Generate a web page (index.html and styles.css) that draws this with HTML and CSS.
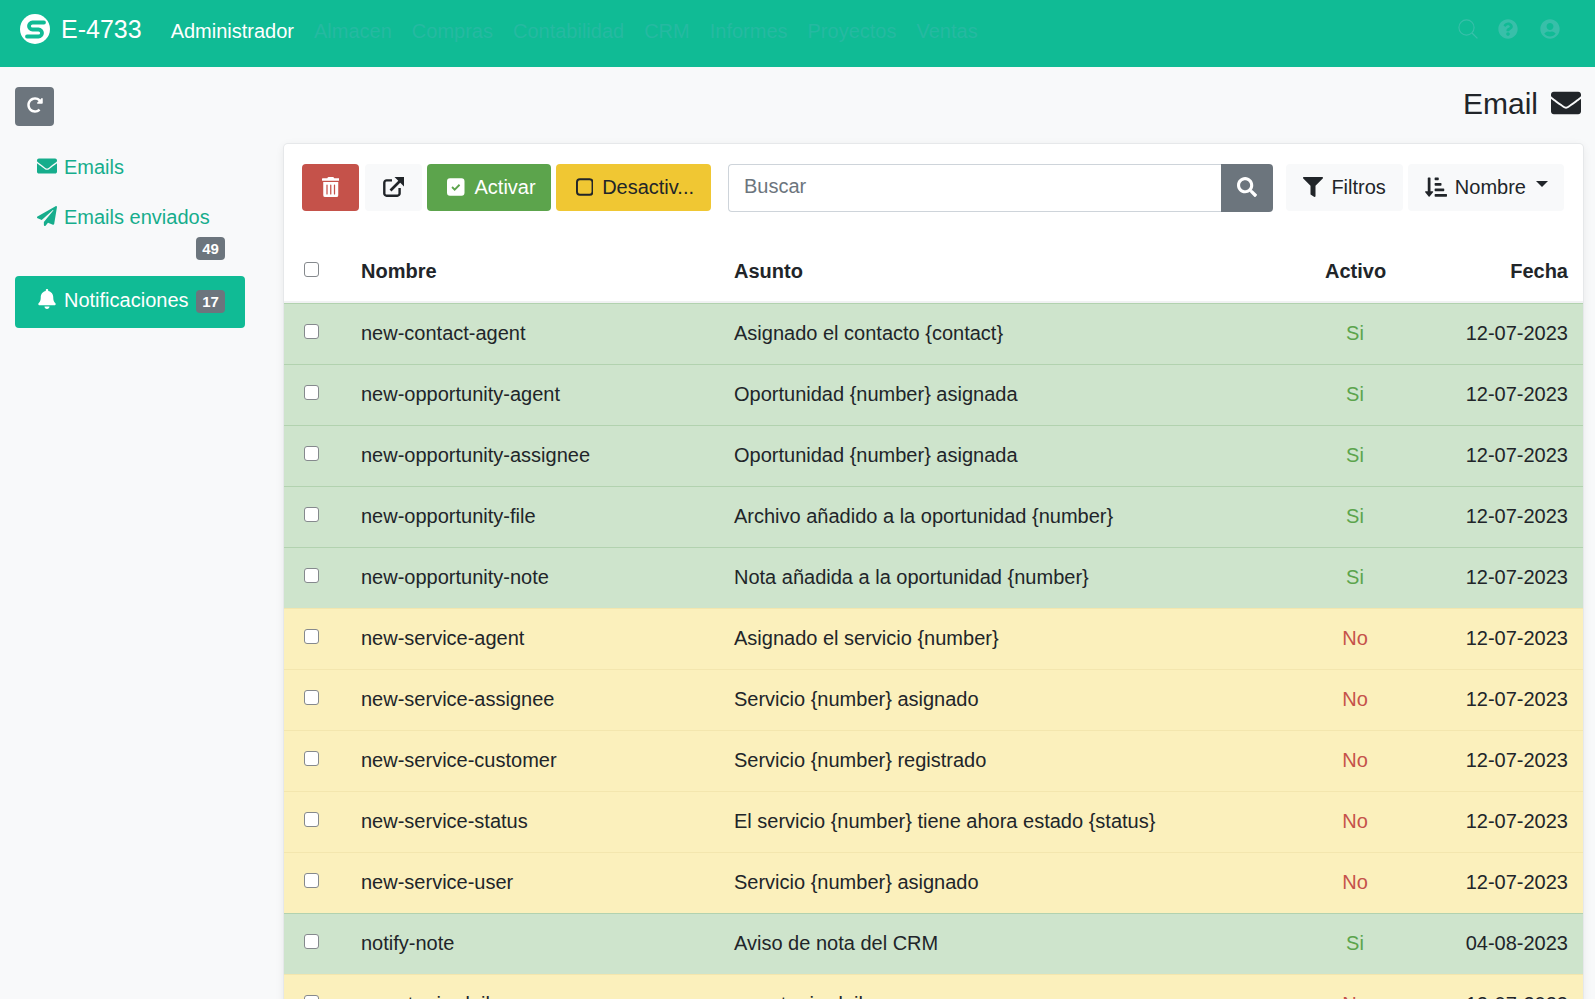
FILE: index.html
```html
<!DOCTYPE html>
<html lang="es">
<head>
    <meta charset="UTF-8">
    <meta name="viewport" content="width=device-width, initial-scale=1.0">
    <title>Email</title>
    <link rel="stylesheet" href="styles.css">
</head>
<body>
    <nav class="topbar">
        <a class="brand" href="#">
            <svg class="brand-logo" viewBox="0 0 30 30"><circle cx="15" cy="15" r="15" fill="#fff"/><path d="M24 8.5H12.5a3.5 3.5 0 0 0 0 7h6a3.5 3.5 0 0 1 0 7H7" fill="none" stroke="#10bb95" stroke-width="3.8" stroke-linecap="round"/></svg>
            <span>E-4733</span>
        </a>
        <div class="menu">
            <a class="menu-item active" href="#">Administrador</a>
            <a class="menu-item" href="#">Almacen</a>
            <a class="menu-item" href="#">Compras</a>
            <a class="menu-item" href="#">Contabilidad</a>
            <a class="menu-item" href="#">CRM</a>
            <a class="menu-item" href="#">Informes</a>
            <a class="menu-item" href="#">Proyectos</a>
            <a class="menu-item" href="#">Ventas</a>
        </div>
        <div class="top-icons">
            <svg class="top-icon top-search" viewBox="0 0 20 20"><circle cx="8.5" cy="8.5" r="7.6" fill="none" stroke="currentColor" stroke-width="1.1"/><path d="M14 14l5.4 5.4" stroke="currentColor" stroke-width="1.3" fill="none"/></svg>
            <svg class="top-icon" viewBox="0 0 512 512"><path fill="currentColor" d="M504 256c0 136.997-111.043 248-248 248S8 392.997 8 256C8 119.083 119.043 8 256 8s248 111.083 248 248zM262.655 90c-54.497 0-89.255 22.957-116.549 63.758-3.536 5.286-2.353 12.415 2.715 16.258l34.699 26.31c5.205 3.947 12.621 3.008 16.665-2.122 17.864-22.658 30.113-35.797 57.303-35.797 20.429 0 45.698 13.148 45.698 32.958 0 14.976-12.363 22.667-32.534 33.976C247.128 238.528 216 254.941 216 296v4c0 6.627 5.373 12 12 12h56c6.627 0 12-5.373 12-12v-1.333c0-28.462 83.186-29.647 83.186-106.667 0-58.002-60.165-102-116.531-102zM256 338c-25.365 0-46 20.635-46 46 0 25.364 20.635 46 46 46s46-20.636 46-46c0-25.365-20.635-46-46-46z"/></svg>
            <svg class="top-icon" viewBox="0 0 496 512"><path fill="currentColor" d="M248 8C111 8 0 119 0 256s111 248 248 248 248-111 248-248S385 8 248 8zm0 96c48.6 0 88 39.4 88 88s-39.4 88-88 88-88-39.4-88-88 39.4-88 88-88zm0 344c-58.7 0-111.3-26.6-146.5-68.2 18.8-35.4 55.6-59.8 98.5-59.8 2.4 0 4.8.4 7.1 1.1 13 4.2 26.6 6.9 40.9 6.9 14.3 0 28-2.7 40.9-6.9 2.3-.7 4.7-1.1 7.1-1.1 42.9 0 79.7 24.4 98.5 59.8C359.3 421.4 306.7 448 248 448z"/></svg>
        </div>
    </nav>

    <div class="page-head">
        <button class="btn-refresh" type="button">
            <svg viewBox="0 0 512 512"><path fill="currentColor" d="M256.455 8c66.269.119 126.437 26.233 170.859 68.685l35.715-35.715C478.149 25.851 504 36.559 504 57.941V192c0 13.255-10.745 24-24 24H345.941c-21.382 0-32.09-25.851-16.971-40.971l41.75-41.75c-30.864-28.899-70.801-44.907-113.23-45.273-92.398-.798-170.283 73.977-169.484 169.442C88.764 348.009 162.184 424 256 424c41.127 0 79.997-14.678 110.629-41.556 4.743-4.161 11.906-3.908 16.368.553l39.662 39.662c4.872 4.872 4.631 12.815-.482 17.433C378.202 479.813 319.926 504 256 504 119.034 504 8.001 392.967 8 256.002 7.999 119.193 119.646 7.755 256.455 8z"/></svg>
        </button>
        <h1 class="page-title">
            Email
            <svg viewBox="0 0 512 512"><path fill="currentColor" d="M502.3 190.8c3.9-3.1 9.7-.2 9.7 4.7V400c0 26.5-21.5 48-48 48H48c-26.5 0-48-21.5-48-48V195.6c0-5 5.7-7.8 9.7-4.7 22.4 17.4 52.1 39.5 154.1 113.6 21.1 15.4 56.7 47.8 92.2 47.6 35.7.3 72-32.8 92.3-47.6 102-74.1 131.6-96.3 154-113.7zM256 320c23.2.4 56.6-29.2 73.4-41.4 132.7-96.3 142.8-104.7 173.4-128.7 5.8-4.5 9.2-11.5 9.2-18.9v-19c0-26.5-21.5-48-48-48H48C21.5 64 0 85.5 0 112v19c0 7.4 3.4 14.3 9.2 18.9 30.6 23.9 40.7 32.4 173.4 128.7 16.8 12.2 50.2 41.8 73.4 41.4z"/></svg>
        </h1>
    </div>

    <div class="content">
        <aside class="sidebar">
            <a class="side-link" href="#">
                <svg class="side-icon" viewBox="0 0 512 512"><path fill="currentColor" d="M502.3 190.8c3.9-3.1 9.7-.2 9.7 4.7V400c0 26.5-21.5 48-48 48H48c-26.5 0-48-21.5-48-48V195.6c0-5 5.7-7.8 9.7-4.7 22.4 17.4 52.1 39.5 154.1 113.6 21.1 15.4 56.7 47.8 92.2 47.6 35.7.3 72-32.8 92.3-47.6 102-74.1 131.6-96.3 154-113.7zM256 320c23.2.4 56.6-29.2 73.4-41.4 132.7-96.3 142.8-104.7 173.4-128.7 5.8-4.5 9.2-11.5 9.2-18.9v-19c0-26.5-21.5-48-48-48H48C21.5 64 0 85.5 0 112v19c0 7.4 3.4 14.3 9.2 18.9 30.6 23.9 40.7 32.4 173.4 128.7 16.8 12.2 50.2 41.8 73.4 41.4z"/></svg>
                <span>Emails</span>
            </a>
            <a class="side-link" href="#">
                <svg class="side-icon" viewBox="0 0 512 512"><path fill="currentColor" d="M476 3.2L12.5 270.6c-18.1 10.4-15.8 35.6 2.2 43.2L121 358.4l287.3-253.2c5.5-4.9 13.3 2.6 8.6 8.3L176 407v80.5c0 23.6 28.5 32.9 42.5 15.8L282 426l124.6 52.2c14.2 6 30.4-2.9 33-18.2l72-432C515 7.8 493.3-6.8 476 3.2z"/></svg>
                <span>Emails enviados</span>
                <span class="badge badge-wrapped">49</span>
            </a>
            <a class="side-link active" href="#">
                <svg class="side-icon" viewBox="0 0 448 512"><path fill="currentColor" d="M224 512c35.32 0 63.97-28.65 63.97-64H160.03c0 35.35 28.65 64 63.97 64zm215.39-149.71c-19.32-20.76-55.47-51.99-55.47-154.29 0-77.7-54.48-139.9-127.94-155.16V32c0-17.67-14.32-32-31.98-32s-31.98 14.33-31.98 32v20.84C118.56 68.1 64.08 130.3 64.08 208c0 102.3-36.15 133.53-55.47 154.29-6 6.45-8.66 14.16-8.61 21.71.11 16.4 12.98 32 32.1 32h383.8c19.12 0 32-15.6 32.1-32 .05-7.55-2.61-15.27-8.61-21.71z"/></svg>
                <span>Notificaciones</span>
                <span class="badge">17</span>
            </a>
        </aside>

        <main class="card">
            <div class="toolbar">
                <button class="btn btn-danger btn-icon" type="button">
                    <svg class="icon" viewBox="0 0 448 512"><path fill="currentColor" d="M32 464a48 48 0 0 0 48 48h288a48 48 0 0 0 48-48V128H32zm272-256a16 16 0 0 1 32 0v224a16 16 0 0 1-32 0zm-96 0a16 16 0 0 1 32 0v224a16 16 0 0 1-32 0zm-96 0a16 16 0 0 1 32 0v224a16 16 0 0 1-32 0zM432 32H312l-9.4-18.7A24 24 0 0 0 281.1 0H166.8a23.72 23.72 0 0 0-21.4 13.3L136 32H16A16 16 0 0 0 0 48v32a16 16 0 0 0 16 16h416a16 16 0 0 0 16-16V48a16 16 0 0 0-16-16z"/></svg>
                </button>
                <button class="btn btn-light btn-icon btn-export" type="button">
                    <svg class="icon icon-export" viewBox="0 0 21 20"><path d="M9 3.4H3.6a2.3 2.3 0 0 0-2.3 2.3v10.7a2.3 2.3 0 0 0 2.3 2.3h10.7a2.3 2.3 0 0 0 2.3-2.3V11" fill="none" stroke="currentColor" stroke-width="2.4"/><path d="M7.5 13.5L17 4" fill="none" stroke="currentColor" stroke-width="2.6"/><path d="M11.5 0H21V9.5z" fill="currentColor"/></svg>
                </button>
                <button class="btn btn-success" type="button">
                    <svg class="icon" viewBox="0 0 18 20"><rect y="1" width="18" height="18" rx="3" fill="#fff"/><path d="M5.2 10l2.7 2.7 5-5" fill="none" stroke="#5ca44c" stroke-width="1.9"/></svg>
                    <span>Activar</span>
                </button>
                <button class="btn btn-warning" type="button">
                    <svg class="icon" viewBox="0 0 18 20"><rect x="1" y="2" width="16" height="16" rx="3" fill="none" stroke="currentColor" stroke-width="2"/></svg>
                    <span>Desactiv...</span>
                </button>
                <div class="search">
                    <input class="search-input" type="text" placeholder="Buscar">
                    <button class="search-btn" type="button">
                        <svg class="icon-wide" viewBox="0 0 512 512"><path fill="currentColor" d="M505 442.7L405.3 343c-4.5-4.5-10.6-7-17-7H372c27.6-35.3 44-79.7 44-128C416 93.1 322.9 0 208 0S0 93.1 0 208s93.1 208 208 208c48.3 0 92.7-16.4 128-44v16.3c0 6.4 2.5 12.5 7 17l99.7 99.7c9.4 9.4 24.6 9.4 33.9 0l28.3-28.3c9.4-9.4 9.4-24.6.1-34zM208 336c-70.7 0-128-57.2-128-128 0-70.7 57.2-128 128-128 70.7 0 128 57.2 128 128 0 70.7-57.2 128-128 128z"/></svg>
                    </button>
                </div>
                <button class="btn btn-light btn-filter" type="button">
                    <svg class="icon-wide" viewBox="0 0 512 512"><path fill="currentColor" d="M487.976 0H24.028C2.71 0-8.047 25.866 7.058 40.971L192 225.941V432c0 7.831 3.821 15.17 10.237 19.662l80 55.98C298.02 518.69 320 507.493 320 487.98V225.941l184.947-184.97C520.021 25.896 509.338 0 487.976 0z"/></svg>
                    <span>Filtros</span>
                </button>
                <button class="btn btn-light btn-sort" type="button">
                    <svg class="icon-sort" viewBox="0 0 512 512"><path fill="currentColor" d="M240 96h64a16 16 0 0 0 16-16V48a16 16 0 0 0-16-16h-64a16 16 0 0 0-16 16v32a16 16 0 0 0 16 16zm0 128h128a16 16 0 0 0 16-16v-32a16 16 0 0 0-16-16H240a16 16 0 0 0-16 16v32a16 16 0 0 0 16 16zm256 192H240a16 16 0 0 0-16 16v32a16 16 0 0 0 16 16h256a16 16 0 0 0 16-16v-32a16 16 0 0 0-16-16zm-256-64h192a16 16 0 0 0 16-16v-32a16 16 0 0 0-16-16H240a16 16 0 0 0-16 16v32a16 16 0 0 0 16 16zm-64 0h-48V48a16 16 0 0 0-16-16H80a16 16 0 0 0-16 16v304H16c-14.19 0-21.37 17.24-11.29 27.31l80 96a16 16 0 0 0 22.62 0l80-96C197.35 369.26 190.22 352 176 352z"/></svg>
                    <span>Nombre</span>
                    <i class="caret"></i>
                </button>
            </div>

            <table class="data-table">
                <colgroup>
                    <col class="col-check">
                    <col class="col-name">
                    <col>
                    <col class="col-state">
                    <col class="col-date">
                </colgroup>
                <thead>
                    <tr>
                        <th class="cell-check"><input class="check" type="checkbox"></th>
                        <th>Nombre</th>
                        <th>Asunto</th>
                        <th class="center">Activo</th>
                        <th class="right">Fecha</th>
                    </tr>
                </thead>
                <tbody>
                    <tr class="row-on"><td class="cell-check"><input class="check" type="checkbox"></td><td>new-contact-agent</td><td>Asignado el contacto {contact}</td><td class="center state">Si</td><td class="right">12-07-2023</td></tr>
                    <tr class="row-on"><td class="cell-check"><input class="check" type="checkbox"></td><td>new-opportunity-agent</td><td>Oportunidad {number} asignada</td><td class="center state">Si</td><td class="right">12-07-2023</td></tr>
                    <tr class="row-on"><td class="cell-check"><input class="check" type="checkbox"></td><td>new-opportunity-assignee</td><td>Oportunidad {number} asignada</td><td class="center state">Si</td><td class="right">12-07-2023</td></tr>
                    <tr class="row-on"><td class="cell-check"><input class="check" type="checkbox"></td><td>new-opportunity-file</td><td>Archivo añadido a la oportunidad {number}</td><td class="center state">Si</td><td class="right">12-07-2023</td></tr>
                    <tr class="row-on"><td class="cell-check"><input class="check" type="checkbox"></td><td>new-opportunity-note</td><td>Nota añadida a la oportunidad {number}</td><td class="center state">Si</td><td class="right">12-07-2023</td></tr>
                    <tr class="row-off"><td class="cell-check"><input class="check" type="checkbox"></td><td>new-service-agent</td><td>Asignado el servicio {number}</td><td class="center state">No</td><td class="right">12-07-2023</td></tr>
                    <tr class="row-off"><td class="cell-check"><input class="check" type="checkbox"></td><td>new-service-assignee</td><td>Servicio {number} asignado</td><td class="center state">No</td><td class="right">12-07-2023</td></tr>
                    <tr class="row-off"><td class="cell-check"><input class="check" type="checkbox"></td><td>new-service-customer</td><td>Servicio {number} registrado</td><td class="center state">No</td><td class="right">12-07-2023</td></tr>
                    <tr class="row-off"><td class="cell-check"><input class="check" type="checkbox"></td><td>new-service-status</td><td>El servicio {number} tiene ahora estado {status}</td><td class="center state">No</td><td class="right">12-07-2023</td></tr>
                    <tr class="row-off"><td class="cell-check"><input class="check" type="checkbox"></td><td>new-service-user</td><td>Servicio {number} asignado</td><td class="center state">No</td><td class="right">12-07-2023</td></tr>
                    <tr class="row-on"><td class="cell-check"><input class="check" type="checkbox"></td><td>notify-note</td><td>Aviso de nota del CRM</td><td class="center state">Si</td><td class="right">04-08-2023</td></tr>
                    <tr class="row-off"><td class="cell-check"><input class="check" type="checkbox"></td><td>report-min-daily</td><td>report-min-daily</td><td class="center state">No</td><td class="right">12-07-2023</td></tr>
                </tbody>
            </table>
        </main>
    </div>
</body>
</html>
```

FILE: styles.css
```css
* {
    box-sizing: border-box;
}

html, body {
    height: 100%;
    overflow: hidden;
}

body {
    margin: 0;
    background-color: #f8f9fa;
    color: #212529;
    font-family: "Liberation Sans", Arial, sans-serif;
    font-size: 20px;
    line-height: 30px;
}

a {
    text-decoration: none;
}

/* top bar */
.topbar {
    display: flex;
    align-items: center;
    height: 67px;
    padding: 0 35px 5px 20px;
    background-color: #10bb95;
}

.brand {
    display: flex;
    align-items: center;
    gap: 11px;
    margin: -4px 19px 0 0;
    color: #fff;
    font-size: 25px;
}

.brand-logo {
    width: 30px;
    height: 30px;
}

.menu {
    display: flex;
}

.menu-item {
    padding: 0 10px;
    color: #25b9a1;
}

.menu-item.active {
    color: #fff;
}

.top-icons {
    display: flex;
    align-items: center;
    gap: 22px;
    margin: -4px 0 0 auto;
    color: #38bfa9;
}

.top-icon {
    width: 20px;
    height: 20px;
}

.top-search {
    margin-right: -2px;
}

/* page head */
.page-head {
    display: flex;
    align-items: flex-start;
    justify-content: space-between;
    height: 77px;
    padding: 20px 14px 0 15px;
}

.btn-refresh {
    display: flex;
    align-items: center;
    justify-content: center;
    width: 39px;
    height: 39px;
    padding: 0 0 3px;
    border: 0;
    border-radius: 4px;
    background-color: #6c757d;
    color: #fff;
}

.btn-refresh svg {
    width: 16px;
    height: 16px;
}

.page-title {
    display: flex;
    align-items: center;
    gap: 13px;
    margin: -1px 0 0;
    height: 36px;
    font-size: 30px;
    font-weight: 400;
    line-height: 36px;
}

.page-title svg {
    width: 30px;
    height: 30px;
    margin-top: -2px;
}

/* layout */
.content {
    display: flex;
    align-items: flex-start;
    padding: 0 12px 0 15px;
}

.sidebar {
    flex: 0 0 230px;
    margin: -2px 39px 0 0;
}

.side-link {
    display: flex;
    flex-wrap: wrap;
    align-items: center;
    padding: 10px 20px 10px 22px;
    border-radius: 4px;
    color: #16ad8c;
}

.side-link.active {
    height: 52px;
    margin-top: 6px;
    padding: 8px 20px 12px 22px;
    background-color: #10bb95;
    color: #fff;
}

.side-icon {
    width: 20px;
    height: 20px;
    margin: -2px 7px 0 0;
}

.badge {
    width: 29px;
    height: 23px;
    margin-left: auto;
    margin-top: 2px;
    border-radius: 4px;
    background-color: #6c757d;
    color: #fff;
    font-size: 15px;
    font-weight: 700;
    line-height: 23px;
    text-align: center;
}

.badge-wrapped {
    margin-top: 5px;
}

/* card */
.card {
    flex: 1;
    min-width: 0;
    padding-top: 20px;
    border-radius: 4px;
    background-color: #fff;
    box-shadow: 0 0 0 1px #e6e8ea, 0 2px 10px rgba(0, 0, 0, .08);
}

.toolbar {
    display: flex;
    align-items: flex-start;
    gap: 5px;
    padding: 0 19px 30px 18px;
}

.btn {
    display: flex;
    align-items: center;
    height: 47px;
    padding: 0 16px 2px 20px;
    border: 0;
    border-radius: 4px;
    font-family: inherit;
    font-size: 20px;
    line-height: 30px;
    white-space: nowrap;
}

.btn-icon {
    justify-content: center;
    width: 57px;
    padding: 0 0 2px;
}

.btn-export {
    margin-left: 1px;
}

.btn-danger {
    background-color: #c5524a;
    color: #fff;
}

.btn-light {
    background-color: #f8f9fa;
    color: #212529;
}

.btn-success {
    padding-right: 15px;
    background-color: #5ca44c;
    color: #fff;
}

.btn-warning {
    padding-right: 17px;
    background-color: #f0c733;
    color: #212529;
}

.btn-warning .icon {
    margin-right: 9px;
}

.icon {
    width: 17.5px;
    height: 20px;
    margin-right: 10px;
}

.btn-icon .icon {
    margin-right: 0;
}

.icon-export {
    width: 21px;
    height: 20px;
}

.icon-wide {
    width: 20px;
    height: 20px;
}

.btn-filter {
    gap: 8px;
    padding: 0 17px 2px 17px;
    margin-left: 8px;
}

.btn-sort {
    padding: 0 16px 2px 17px;
}

.icon-sort {
    width: 22px;
    height: 22px;
    margin-right: 8px;
}

.caret {
    width: 0;
    height: 0;
    margin: -6px 0 0 10px;
    border-top: 6px solid #212529;
    border-left: 6px solid transparent;
    border-right: 6px solid transparent;
}

.search {
    display: flex;
    flex: 1;
    height: 48px;
    margin-left: 12px;
}

.search-input {
    flex: 1;
    min-width: 0;
    padding: 0 15px 3px;
    border: 1px solid #ced4da;
    border-right: 0;
    border-radius: 4px 0 0 4px;
    color: #495057;
    font-family: inherit;
    font-size: 20px;
}

.search-input::placeholder {
    color: #6c757d;
}

.search-btn {
    display: flex;
    align-items: center;
    justify-content: center;
    width: 52px;
    padding: 0 0 3px;
    border: 0;
    border-radius: 0 4px 4px 0;
    background-color: #6c757d;
    color: #fff;
}

/* table */
.data-table {
    width: 100%;
    table-layout: fixed;
    border-collapse: separate;
    border-spacing: 0;
}

.col-check {
    width: 62px;
}

.col-name {
    width: 373px;
}

.col-state {
    width: 90px;
}

.col-date {
    width: 183px;
}

.data-table th,
.data-table td {
    padding: 14px 15px 16px;
    text-align: left;
    vertical-align: top;
}

.data-table th {
    padding-bottom: 15px;
    border-bottom: 2px solid #f1f2f3;
}

.data-table .cell-check {
    padding: 20px 0 0 20px;
}

.data-table .center {
    text-align: center;
}

.data-table .right {
    text-align: right;
}

.check {
    display: block;
    width: 15px;
    height: 15px;
    margin: 0;
    border: 1px solid #85898d;
    border-radius: 3px;
    background-color: #fff;
    appearance: none;
}

.row-on td {
    background-color: #cee4cc;
    border-top: 1px solid #b2d2af;
}

.row-off td {
    background-color: #fbf0bc;
    border-top: 1px solid #f3e6ae;
}

.row-on .state {
    color: #5ca44c;
}

.row-off .state {
    color: #c5524a;
}
```
